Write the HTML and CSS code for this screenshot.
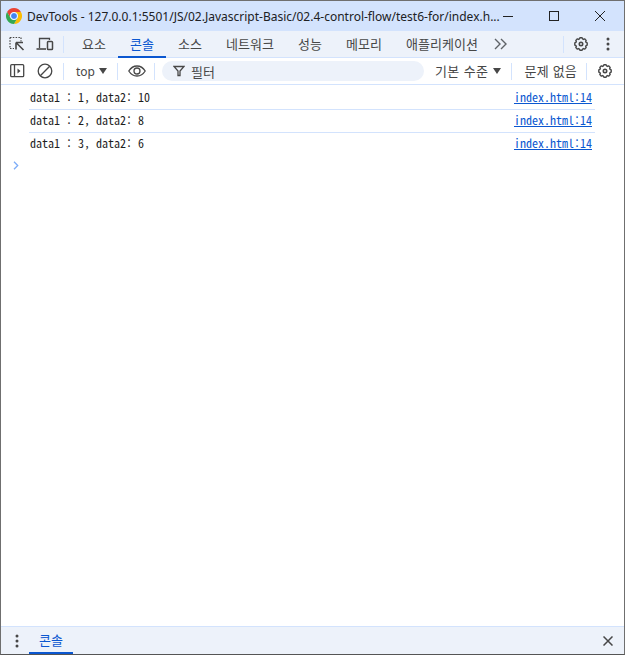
FILE: index.html
```html
<!DOCTYPE html>
<html lang="ko">
<head>
<meta charset="utf-8">
<title>DevTools</title>
<link rel="stylesheet" href="styles.css">
</head>
<body>
<div class="window">
  <header class="titlebar">
    <svg class="chrome-logo" width="16" height="16" viewBox="0 0 16 16">
      <path d="M8 0A8 8 0 0 1 14.93 4H8A4 4 0 0 0 4.54 10L1.07 4A8 8 0 0 1 8 0z" fill="#ea4335"/>
      <path d="M14.93 4A8 8 0 0 1 8 16L11.46 10A4 4 0 0 0 8 4z" fill="#fbbc04"/>
      <path d="M1.07 4A8 8 0 0 0 8 16L11.46 10A4 4 0 0 1 4.54 10z" fill="#34a853"/>
      <circle cx="8" cy="8" r="3.5" fill="#4285f4" stroke="#fff" stroke-width="1"/>
    </svg>
    <span class="title">DevTools - 127.0.0.1:5501/JS/02.Javascript-Basic/02.4-control-flow/test6-for/index.h...</span>
    <div class="winctrls">
      <svg width="12" height="12" viewBox="0 0 12 12"><path d="M1 6.5h10" stroke="#222" stroke-width="1"/></svg>
      <svg width="12" height="12" viewBox="0 0 12 12"><rect x="1.5" y="1.5" width="9" height="9" fill="none" stroke="#222" stroke-width="1"/></svg>
      <svg width="12" height="12" viewBox="0 0 12 12"><path d="M1 1l10 10M11 1L1 11" stroke="#222" stroke-width="1"/></svg>
    </div>
  </header>

  <nav class="tabbar">
    <button class="icon-btn first">
      <svg width="16" height="16" viewBox="0 0 16 16" fill="none">
        <path d="M1 1.5h11M1 1.5v11M1 12.500h4M12 1.500v4" stroke="#474747" stroke-width="1.200" stroke-dasharray="1.500 1.300"/>
        <path d="M7 6.500l7 0M7 6.500v7M7.500 7l7 7" stroke="#474747" stroke-width="1.600"/>
      </svg>
    </button>
    <button class="icon-btn">
      <svg width="18" height="16" viewBox="0 0 18 16" fill="none" stroke="#474747" stroke-width="1.300">
        <path d="M3.500 12V2.500h10V4"/>
        <path d="M0.500 13h9.500" stroke-width="1.600"/>
        <rect x="11.500" y="5.500" width="5" height="8" rx=".8" stroke-width="1.500"/>
      </svg>
    </button>
    <span class="divider"></span>
    <div class="tabs">
      <span class="tab">요소</span>
      <span class="tab active">콘솔</span>
      <span class="tab">소스</span>
      <span class="tab">네트워크</span>
      <span class="tab">성능</span>
      <span class="tab">메모리</span>
      <span class="tab">애플리케이션</span>
    </div>
    <svg class="more" width="14" height="12" viewBox="0 0 14 12" fill="none" stroke="#5f6368" stroke-width="1.400"><path d="M1 1l5 5-5 5M7 1l5 5-5 5"/></svg>
    <span class="divider d-right"></span>
    <svg class="gear g1" width="16" height="16" viewBox="0 0 16 16"><use href="#gear"/></svg>
    <svg class="kebab" width="4" height="14" viewBox="0 0 4 14" fill="#474747"><circle cx="2" cy="2" r="1.500"/><circle cx="2" cy="7" r="1.500"/><circle cx="2" cy="12" r="1.500"/></svg>
  </nav>

  <div class="toolbar">
    <button class="icon-btn first">
      <svg width="15" height="14" viewBox="0 0 15 14" fill="none" stroke="#474747" stroke-width="1.300">
        <rect x=".7" y=".7" width="13" height="12" rx="1"/>
        <path d="M4.500 1v12" />
        <path d="M7.500 4.500l3 2.500-3 2.500z" fill="#474747" stroke="none"/>
      </svg>
    </button>
    <button class="icon-btn">
      <svg width="16" height="16" viewBox="0 0 16 16" fill="none" stroke="#474747" stroke-width="1.300"><circle cx="8" cy="8" r="6.800"/><path d="M3.300 12.700L12.700 3.300"/></svg>
    </button>
    <span class="divider"></span>
    <span class="ctx">top</span>
    <span class="caret"></span>
    <span class="divider d-a"></span>
    <svg class="eye" width="18" height="12" viewBox="0 0 18 12" fill="none" stroke="#474747" stroke-width="1.300"><path d="M.8 6C3 2.500 6 1 9 1s6 1.500 8.200 5C15 9.500 12 11 9 11S3 9.500.8 6z"/><circle cx="9" cy="6" r="3"/></svg>
    <span class="divider d-b"></span>
    <div class="filter">
      <svg width="12" height="12" viewBox="0 0 12 12" fill="none" stroke="#474747" stroke-width="1.300"><path d="M1 1.500h10L7 6v4.500H5V6z"/></svg>
      <span>필터</span>
    </div>
    <span class="level">기본 수준</span>
    <span class="caret level-caret"></span>
    <span class="divider d-c"></span>
    <span class="issues">문제 없음</span>
    <span class="divider d-d"></span>
    <svg class="gear g2" width="16" height="16" viewBox="0 0 16 16"><use href="#gear"/></svg>
  </div>

  <main class="console">
    <div class="row"><span>data1 : 1, data2: 10</span><a class="src">index.html:14</a></div>
    <div class="row"><span>data1 : 2, data2: 8</span><a class="src">index.html:14</a></div>
    <div class="row"><span>data1 : 3, data2: 6</span><a class="src">index.html:14</a></div>
    <div class="prompt"><svg width="6" height="9" viewBox="0 0 6 9" fill="none" stroke="#7cacf8" stroke-width="1.300"><path d="M1 .8l3.700 3.700L1 8.200"/></svg></div>
  </main>

  <footer class="drawer">
    <svg class="kebab" width="4" height="14" viewBox="0 0 4 14" fill="#474747"><circle cx="2" cy="2" r="1.500"/><circle cx="2" cy="7" r="1.500"/><circle cx="2" cy="12" r="1.500"/></svg>
    <span class="drawer-tab">콘솔</span>
    <svg class="close" width="10" height="10" viewBox="0 0 10 10" stroke="#474747" stroke-width="1.500"><path d="M.5.500l9 9M9.500.500l-9 9"/></svg>
  </footer>
</div>

<svg class="defs" width="0" height="0">
  <defs>
    <path id="tooth" d="M6.120 3.470L6.900 1.800H9.100L9.880 3.470"/>
    <g id="gear" fill="none" stroke="#474747" stroke-width="1.400" stroke-linejoin="round">
      <use href="#tooth"/>
      <use href="#tooth" transform="rotate(45 8 8)"/>
      <use href="#tooth" transform="rotate(90 8 8)"/>
      <use href="#tooth" transform="rotate(135 8 8)"/>
      <use href="#tooth" transform="rotate(180 8 8)"/>
      <use href="#tooth" transform="rotate(225 8 8)"/>
      <use href="#tooth" transform="rotate(270 8 8)"/>
      <use href="#tooth" transform="rotate(315 8 8)"/>
      <circle cx="8" cy="8" r="1.700" stroke-width="1.600"/>
    </g>
  </defs>
</svg>
</body>
</html>
```

FILE: styles.css
```css
* { box-sizing: border-box; }
html, body { margin: 0; padding: 0; }
body {
  width: 625px;
  height: 655px;
  overflow: hidden;
  font-family: "Noto Sans CJK KR", "Noto Sans", sans-serif;
  color: #474747;
}
button { border: 0; background: none; padding: 0; display: flex; align-items: center; justify-content: center; }
.defs { position: absolute; }

.window {
  width: 625px;
  height: 655px;
  display: flex;
  flex-direction: column;
  border: 1px solid #6f6f6f;
  border-bottom-color: #555;
  background: #fff;
}

.titlebar {
  height: 30px;
  flex: none;
  background: #d3e3fd;
  display: flex;
  align-items: center;
  padding-left: 5px;
}
.chrome-logo { flex: none; }
.title {
  margin-left: 5px;
  font: 12px "Noto Sans", "Open Sans", sans-serif;
  color: #202124;
  white-space: nowrap;
  width: 475px;
  overflow: hidden;
}
.winctrls { display: flex; margin-left: 0; gap: 34px; }

.tabbar {
  height: 27px;
  flex: none;
  background: #edf2fa;
  border-bottom: 1px solid #d3e3fd;
  display: flex;
  align-items: center;
  font-size: 13px;
  letter-spacing: .04px;
}
.icon-btn { width: 18px; height: 18px; flex: none; }
.icon-btn.first { margin-left: 7px; margin-right: 10px; }
.divider { width: 1px; height: 17px; background: #d3e3fd; flex: none; margin-left: 9px; }
.tabs { display: flex; height: 100%; margin-left: 6px; flex: none; }
.tab { height: 27px; padding: 0 12px; display: flex; align-items: center; border-bottom: 2px solid transparent; flex: none; }
.tab.active { color: #0b57d0; border-bottom-color: #0b57d0; }
.more { margin-left: 4px; flex: none; }
.d-right { margin-left: 55px; }
.g1 { margin-left: 9px; flex: none; }
.tabbar .kebab { margin-left: 17px; flex: none; }

.toolbar {
  height: 27px;
  flex: none;
  background: #fff;
  border-bottom: 1px solid #d3e3fd;
  display: flex;
  align-items: center;
  font-size: 13px;
}
.ctx { margin-left: 12px; font: 12px "Noto Sans", sans-serif; }
.caret {
  width: 0; height: 0; flex: none;
  margin-left: 4px;
  border-left: 4.500px solid transparent;
  border-right: 4.500px solid transparent;
  border-top: 6px solid #474747;
}
.level-caret { margin-left: 5px; }
.d-a { margin-left: 10px; }
.eye { margin-left: 10px; flex: none; }
.d-b { margin-left: 8px; }
.filter {
  margin-left: 7px;
  width: 262px;
  height: 20px;
  border-radius: 10px;
  background: #edf2fa;
  display: flex;
  align-items: center;
  padding-left: 11px;
  gap: 6px;
  flex: none;
}
.level { margin-left: 11px; flex: none; letter-spacing: .4px; margin-top: -1px; }
.d-c { margin-left: 10px; }
.issues { margin-left: 12px; flex: none; letter-spacing: .2px; margin-top: -1px; }
.d-d { margin-left: 9px; }
.g2 { margin-left: 10px; flex: none; }

.console {
  flex: 1;
  padding-left: 12px;
  font: 12px "Noto Sans Mono CJK KR", "Liberation Mono", monospace;
  color: #1f1f1f;
}
.row {
  height: 23px;
  margin-left: 16px;
  margin-right: 29px;
  padding: 0 3px 4px 1px;
  border-bottom: 1px solid #d3e3fd;
  display: flex;
  align-items: center;
  justify-content: space-between;
}
.row:first-child { height: 25px; padding-bottom: 2px; }
.row:nth-of-type(3) { border-bottom: 0; }
.src { color: #0b57d0; text-decoration: underline; }
.prompt { height: 18px; display: flex; align-items: center; }

.drawer {
  height: 28px;
  flex: none;
  background: #edf2fa;
  border-top: 1px solid #d3e3fd;
  display: flex;
  align-items: center;
  font-size: 13px;
}
.drawer .kebab { margin-left: 14px; flex: none; }
.drawer-tab {
  margin-left: 10px;
  width: 44px;
  height: 27px;
  display: flex;
  align-items: center;
  justify-content: center;
  color: #0b57d0;
  border-bottom: 2px solid #0b57d0;
}
.close { margin-left: auto; margin-right: 11px; flex: none; }
```
